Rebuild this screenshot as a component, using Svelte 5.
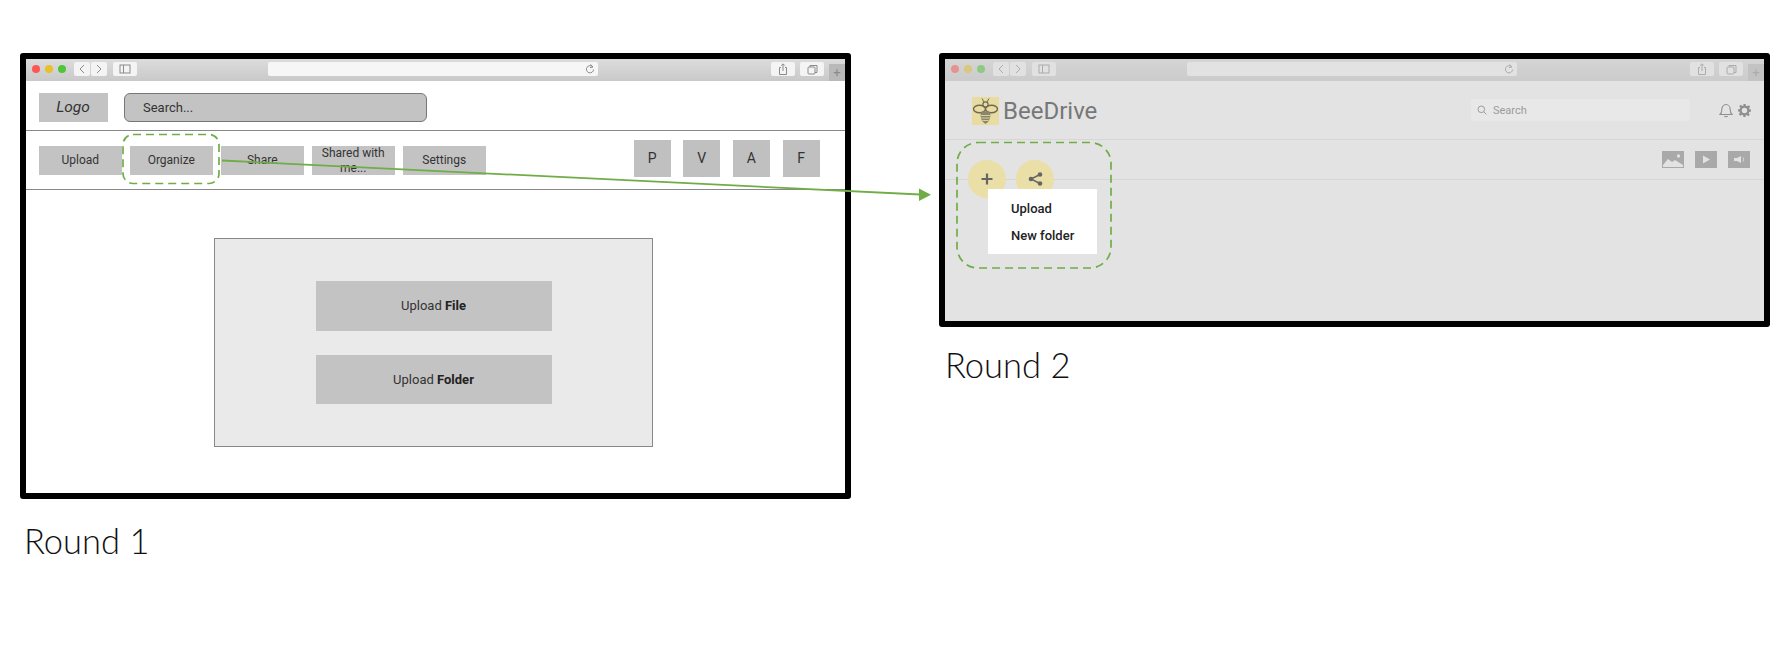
<script>
  const navItems = [
    { label: 'Upload' },
    { label: 'Organize' },
    { label: 'Share' },
    { label: 'Shared with me...' },
    { label: 'Settings' }
  ];
  const letters = ['P', 'V', 'A', 'F'];
</script>

{#snippet toolbar(dim)}
  <div class="toolbar" class:dim>
    <div class="dots">
      <span class="dot red"></span>
      <span class="dot yellow"></span>
      <span class="dot green"></span>
    </div>
    <div class="pair">
      <span class="tb half">
        <svg width="8" height="10" viewBox="0 0 8 10"><path d="M6 1 2 5l4 4" /></svg>
      </span>
      <span class="tb half">
        <svg width="8" height="10" viewBox="0 0 8 10"><path d="M2 1l4 4-4 4" /></svg>
      </span>
    </div>
    <span class="tb side">
      <svg width="12" height="10" viewBox="0 0 12 10"><rect x="1" y="1" width="10" height="8" /><path d="M4.500 1v8" /></svg>
    </span>
    <div class="url">
      <svg width="10" height="10" viewBox="0 0 10 10"><path d="M7.800 3A3.600 3.600 0 1 0 8.600 5.500M5.600 .4 7.900 3 5 3.600" /></svg>
    </div>
    <span class="tb action">
      <svg width="10" height="12" viewBox="0 0 10 12"><path d="M3 4.500H1.500v7h7v-7H7M5 8V1M3.200 2.600 5 .8l1.800 1.800" /></svg>
    </span>
    <span class="tb action">
      <svg width="11" height="11" viewBox="0 0 11 11"><rect x="1" y="3" width="7" height="7" rx="1" /><path d="M3 3V1.500h7v7H8" /></svg>
    </span>
    <span class="newtab">+</span>
  </div>
{/snippet}

<div class="page">
  <section class="col first">
    <div class="win one">
      {@render toolbar(false)}
      <header class="top">
        <div class="logo">Logo</div>
        <div class="search">Search...</div>
      </header>
      <nav class="nav">
        {#each navItems as item}
          <button class="wf">{item.label}</button>
        {/each}
        <div class="letters">
          {#each letters as l}
            <span class="letter">{l}</span>
          {/each}
        </div>
      </nav>
      <main class="stage">
        <div class="panel">
          <button class="big">Upload <b>File</b></button>
          <button class="big">Upload <b>Folder</b></button>
        </div>
      </main>
    </div>
    <h2>Round 1</h2>
  </section>

  <section class="col second">
    <div class="win two">
      {@render toolbar(true)}
      <header class="bee-top">
        <div class="brand">
          <span class="mark">
            <svg width="27" height="28" viewBox="0 0 27 28" fill="none" stroke="#6f6a50">
              <path d="M12 5 10 1.500M15 5l2-3.500" stroke-width="1" />
              <circle cx="13.500" cy="7.500" r="2.600" stroke-width="1.200" />
              <ellipse cx="7.500" cy="12" rx="6" ry="3.800" stroke-width="1.400" />
              <ellipse cx="19.500" cy="12" rx="6" ry="3.800" stroke-width="1.400" />
              <path d="M13.500 27c-3.800-2-5.500-7-4.700-11 .8-2.200 8.600-2.200 9.400 0 .8 4-.9 9-4.700 11Z" fill="#8a866b" stroke="none" />
              <path d="M9 18.500h9M9.300 21h8.400M10.500 23.500h6" stroke="#dcd19a" stroke-width="1" />
            </svg>
          </span>
          <span class="name">BeeDrive</span>
        </div>
        <div class="soft-search">
          <svg width="10" height="10" viewBox="0 0 10 10" fill="none" stroke="#9b9b9b" stroke-width="1"><circle cx="4.300" cy="4.300" r="3.300" /><path d="m6.800 6.800 2.500 2.500" /></svg>
          <span>Search</span>
        </div>
        <svg class="bell" width="14" height="15" viewBox="0 0 14 15" fill="none" stroke="#8f8f8f" stroke-width="1.100"><path d="M1 11.500c1.500-1.300 1.800-2.700 1.800-5C2.800 3.800 4.600 1.500 7 1.500s4.200 2.300 4.200 5c0 2.300.3 3.700 1.800 5ZM5.500 13c.3 1 2.700 1 3 0" /></svg>
        <svg class="gear" width="13" height="13" viewBox="0 0 24 24" fill="#8f8f8f"><path fill-rule="evenodd" d="M10 0h4l.6 3.400 2.300.9 2.800-2 2.800 2.800-2 2.800.9 2.300L24 10v4l-3.400.6-.9 2.300 2 2.800-2.800 2.800-2.800-2-2.300.9L14 24h-4l-.6-3.400-2.300-.9-2.800 2-2.800-2.800 2-2.800-.9-2.300L0 14v-4l3.400-.6.9-2.300-2-2.800 2.800-2.800 2.800 2 2.300-.9ZM12 7a5 5 0 1 0 0 10 5 5 0 0 0 0-10Z" /></svg>
      </header>
      <div class="bee-tools">
        <div class="fabs">
          <span class="fab">
            <svg width="12" height="12" viewBox="0 0 12 12"><path d="M6 .5v11M.5 6h11" stroke="#666" stroke-width="2.200" /></svg>
          </span>
          <span class="fab">
            <svg width="15" height="14" viewBox="0 0 15 14" fill="#666"><circle cx="12" cy="2.500" r="2.300" /><circle cx="3" cy="7" r="2.300" /><circle cx="12" cy="11.500" r="2.300" /><path d="M12 2.500 3 7l9 4.500" fill="none" stroke="#666" stroke-width="1.400" /></svg>
          </span>
        </div>
        <div class="media">
          <span class="m">
            <svg width="22" height="17" viewBox="0 0 22 17"><path d="M1 14 6 8l4 3 3-2 8 5v2H1Z" fill="#e2e2e2" /><circle cx="16.500" cy="5" r="1.700" fill="#e2e2e2" /></svg>
          </span>
          <span class="m">
            <svg width="22" height="17" viewBox="0 0 22 17"><path d="M8 4.500v8l7-4Z" fill="#e2e2e2" /></svg>
          </span>
          <span class="m">
            <svg width="22" height="17" viewBox="0 0 22 17" fill="none"><path d="M6 7h3l4-2v7l-4-2H6Z" fill="#e2e2e2" /><path d="M15 6.500c.8 1 .8 3 0 4" stroke="#e2e2e2" /></svg>
          </span>
        </div>
        <div class="menu">
          <span>Upload</span>
          <span>New folder</span>
        </div>
      </div>
    </div>
    <h2>Round 2</h2>
  </section>

  <svg class="notes" width="1792" height="646" viewBox="0 0 1792 646" fill="none">
    <rect x="123" y="134.500" width="96" height="49" rx="10" stroke="#70ad47" stroke-width="1.700" stroke-dasharray="8 5" />
    <rect x="957" y="142.500" width="154" height="125.500" rx="21" stroke="#70ad47" stroke-width="1.700" stroke-dasharray="8 5" />
    <path d="M222 160.500 920 194.500" stroke="#70ad47" stroke-width="1.800" />
    <path d="M931 194.700 919 188.500v12.500Z" fill="#70ad47" />
  </svg>
</div>

<style>
  :global(body) { margin: 0; background: #fff; }
  .page {
    position: relative;
    width: 1792px;
    height: 646px;
    box-sizing: border-box;
    padding: 53px 0 0 20px;
    display: flex;
    align-items: flex-start;
    gap: 88px;
    overflow: hidden;
    font-family: Roboto, "Liberation Sans", sans-serif;
    color: #333;
  }
  .col { width: 831px; flex: none; }
  .win {
    box-sizing: border-box;
    border: 6px solid #000;
    border-radius: 3px;
    display: flex;
    flex-direction: column;
  }
  .one { height: 446px; background: #fff; }
  .two { height: 274px; background: #e3e3e3; position: relative; }
  h2 {
    margin: 0;
    font: 300 34.500px/40px Lato, "Open Sans", sans-serif;
    color: #111;
  }
  .first h2 { padding: 21.500px 0 0 4px; }
  .second h2 { padding: 18px 0 0 6px; }

  .toolbar {
    position: relative;
    flex: none;
    height: 22px;
    background: linear-gradient(#dcdcdc, #c9c9c9);
    display: flex;
    align-items: flex-start;
    padding-top: 3px;
    box-sizing: border-box;
  }
  .toolbar.dim::after {
    content: '';
    position: absolute;
    inset: 0;
    background: rgba(205, 205, 205, .5);
  }
  .dots { display: flex; gap: 5px; margin: 3px 0 0 6px; }
  .dot { width: 8px; height: 8px; border-radius: 50%; }
  .red { background: #fc5753; }
  .yellow { background: #e8c02c; }
  .green { background: #4fc53a; }
  .pair { display: flex; gap: 1px; margin-left: 8px; }
  .tb {
    height: 14px;
    background: #f4f4f4;
    border-radius: 2px;
    display: flex;
    align-items: center;
    justify-content: center;
  }
  .tb svg, .url svg { fill: none; stroke: #8a8a8a; stroke-width: 1; }
  .half { width: 16px; }
  .side { width: 24px; margin-left: 6px; }
  .url {
    flex: none;
    width: 330px;
    height: 14px;
    margin-left: 131px;
    background: #f6f6f6;
    border-radius: 2px;
    display: flex;
    align-items: center;
    justify-content: flex-end;
    padding-right: 3px;
    box-sizing: border-box;
  }
  .action { width: 24px; margin-left: 5px; }
  .url + .action { margin-left: auto; }
  .newtab {
    width: 16px;
    height: 17px;
    margin: 2px 0 0 5px;
    background: #b9b9b9;
    color: #8a8a8a;
    font-size: 13px;
    line-height: 18px;
    text-align: center;
  }

  .top {
    flex: none;
    height: 50px;
    box-sizing: border-box;
    padding: 12px 0 0 12.500px;
    border-bottom: 1.500px solid #888;
    display: flex;
    align-items: flex-start;
    gap: 16.500px;
  }
  .logo {
    width: 69px;
    height: 29px;
    background: #c3c3c3;
    font-style: italic;
    font-size: 15.500px;
    line-height: 29px;
    text-align: center;
  }
  .search {
    width: 303px;
    height: 29px;
    box-sizing: border-box;
    background: #c3c3c3;
    border: 1px solid #777;
    border-radius: 6px;
    padding-left: 18px;
    font-size: 13px;
    line-height: 27px;
  }
  .nav {
    flex: none;
    height: 59px;
    box-sizing: border-box;
    padding: 1px 25.500px 0 12.500px;
    border-bottom: 1.500px solid #888;
    display: flex;
    align-items: center;
    gap: 7.500px;
  }
  .wf {
    width: 83.500px;
    height: 29px;
    padding: 0 6px;
    border: 0;
    background: #c3c3c3;
    color: #333;
    font: 12px/15px Roboto, sans-serif;
  }
  .letters { display: flex; gap: 12.600px; margin: 0 0 3.500px auto; }
  .letter {
    width: 37px;
    height: 37px;
    background: #c0c0c0;
    font-size: 14px;
    line-height: 37px;
    text-align: center;
  }
  .stage { flex: 1; padding: 48px 0 0 188px; }
  .panel {
    width: 439px;
    height: 209px;
    box-sizing: border-box;
    background: #eaeaea;
    border: 1px solid #888;
    display: flex;
    flex-direction: column;
    align-items: center;
    justify-content: center;
    gap: 24px;
  }
  .big {
    width: 236px;
    height: 49.500px;
    border: 0;
    background: #c3c3c3;
    color: #333;
    font: 13px Roboto, sans-serif;
  }
  .big b { font-weight: 700; color: #222; }

  .bee-top {
    flex: none;
    height: 59px;
    box-sizing: border-box;
    border-bottom: 1px solid #d6d6d6;
    padding: 16px 13px 0 27px;
    display: flex;
    align-items: flex-start;
  }
  .brand { display: flex; align-items: center; gap: 4px; }
  .mark { width: 27px; height: 28px; background: #e8dca2; display: block; }
  .mark svg { display: block; }
  .name { font-size: 24px; line-height: 28px; color: #777; }
  .soft-search {
    width: 219px;
    height: 22px;
    margin: 2px 0 0 auto;
    background: #e8e8e8;
    border-radius: 2px;
    box-sizing: border-box;
    padding-left: 6px;
    display: flex;
    align-items: center;
    gap: 6px;
    font-size: 11px;
    color: #9b9b9b;
  }
  .bell { margin: 6px 0 0 29px; }
  .gear { margin: 7px 0 0 5px; }

  .bee-tools {
    position: relative;
    flex: none;
    height: 40px;
    box-sizing: border-box;
    border-bottom: 1px solid #d6d6d6;
    display: flex;
    justify-content: space-between;
    padding: 11px 14px 0 23px;
  }
  .fabs { display: flex; gap: 10px; margin-top: 9px; height: 38px; }
  .fab {
    width: 38px;
    height: 38px;
    border-radius: 50%;
    background: #eadfa6;
    display: flex;
    align-items: center;
    justify-content: center;
  }
  .media { display: flex; gap: 11px; }
  .m { width: 22px; height: 17px; background: #a9a9a9; display: block; }
  .m svg { display: block; }
  .menu {
    position: absolute;
    left: 43px;
    top: 49px;
    width: 109px;
    height: 65px;
    box-sizing: border-box;
    background: #fff;
    padding: 11px 0 0 23px;
    display: flex;
    flex-direction: column;
    gap: 9px;
    font-size: 13px;
    line-height: 18px;
    font-weight: 500;
    color: #222;
  }

  .notes { position: absolute; inset: 0; pointer-events: none; }
</style>
